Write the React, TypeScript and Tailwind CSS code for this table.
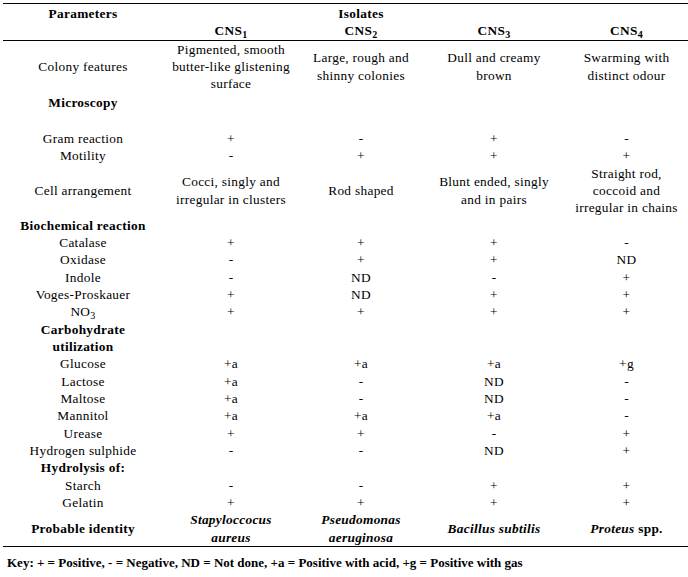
import React from 'react';

type Row = {
  label: React.ReactNode;
  bold?: boolean;
  cells?: React.ReactNode[];
  cls?: string;
};

const lines = (...parts: string[]) =>
  parts.map((p, i) => (
    <React.Fragment key={i}>
      {i > 0 && <br />}
      {p}
    </React.Fragment>
  ));

const rows: Row[] = [
  {
    label: 'Colony features',
    cls: 'pt-[1px]',
    cells: [
      lines('Pigmented, smooth', 'butter-like glistening', 'surface'),
      lines('Large, rough and', 'shinny colonies'),
      lines('Dull and creamy', 'brown'),
      lines('Swarming with', 'distinct odour'),
    ],
  },
  { label: 'Microscopy', bold: true, cls: 'pt-[1px] pb-[19px]' },
  { label: 'Gram reaction', cells: ['+', '-', '+', '-'] },
  { label: 'Motility', cells: ['-', '+', '+', '+'] },
  {
    label: 'Cell arrangement',
    cells: [
      lines('Cocci, singly and', 'irregular in clusters'),
      'Rod shaped',
      lines('Blunt ended, singly', 'and in pairs'),
      lines('Straight rod,', 'coccoid and', 'irregular in chains'),
    ],
  },
  { label: 'Biochemical reaction', bold: true },
  { label: 'Catalase', cells: ['+', '+', '+', '-'] },
  { label: 'Oxidase', cells: ['-', '+', '+', 'ND'] },
  { label: 'Indole', cells: ['-', 'ND', '-', '+'] },
  { label: 'Voges-Proskauer', cells: ['+', 'ND', '+', '+'] },
  {
    label: (
      <>
        NO<sub>3</sub>
      </>
    ),
    cells: ['+', '+', '+', '+'],
  },
  { label: lines('Carbohydrate', 'utilization'), bold: true },
  { label: 'Glucose', cells: ['+a', '+a', '+a', '+g'] },
  { label: 'Lactose', cells: ['+a', '-', 'ND', '-'] },
  { label: 'Maltose', cells: ['+a', '-', 'ND', '-'] },
  { label: 'Mannitol', cells: ['+a', '+a', '+a', '-'] },
  { label: 'Urease', cells: ['+', '+', '-', '+'] },
  { label: 'Hydrogen sulphide', cells: ['-', '-', 'ND', '+'] },
  { label: 'Hydrolysis of:', bold: true },
  { label: 'Starch', cells: ['-', '-', '+', '+'] },
  { label: 'Gelatin', cells: ['+', '+', '+', '+'] },
];

const Cns = ({ n }: { n: number }) => (
  <>
    CNS<sub>{n}</sub>
  </>
);

export default function App() {
  return (
    <div className="font-serif">
      <div className="w-[688px] h-[577px] bg-white text-black text-[13.33px] leading-[17.33px] tracking-[0.3px] font-[Liberation_Serif,serif]">
        <div className="pt-[3px] pl-[3px]">
          <table className="w-[685px] table-fixed border-collapse">
            <colgroup>
              <col className="w-[160px]" />
              <col className="w-[136px]" />
              <col className="w-[124px]" />
              <col className="w-[142px]" />
              <col className="w-[123px]" />
            </colgroup>
            <thead>
              <tr className="border-t border-black">
                <th className="p-0 pt-[1px] font-bold text-center">Parameters</th>
                <th className="p-0 pt-[1px]"></th>
                <th className="p-0 pt-[1px] font-bold text-center">Isolates</th>
                <th className="p-0 pt-[1px]"></th>
                <th className="p-0 pt-[1px]"></th>
              </tr>
              <tr className="border-b border-black">
                <th className="p-0"></th>
                {[1, 2, 3, 4].map((n) => (
                  <th key={n} className="p-0 font-bold text-center">
                    <Cns n={n} />
                  </th>
                ))}
              </tr>
            </thead>
            <tbody>
              {rows.map((r, i) => (
                <tr key={i}>
                  <td
                    className={`p-0 text-center align-middle whitespace-nowrap ${r.bold ? 'font-bold' : ''} ${r.cls ?? ''}`}
                  >
                    {r.label}
                  </td>
                  {[0, 1, 2, 3].map((c) => (
                    <td key={c} className="p-0 text-center align-middle whitespace-nowrap">
                      {r.cells ? r.cells[c] : ''}
                    </td>
                  ))}
                </tr>
              ))}
              <tr className="border-b border-black font-bold">
                <td className="p-0 text-center align-middle">Probable identity</td>
                <td className="p-0 text-center align-middle italic">
                  {lines('Stapyloccocus', 'aureus')}
                </td>
                <td className="p-0 text-center align-middle italic">
                  {lines('Pseudomonas', 'aeruginosa')}
                </td>
                <td className="p-0 text-center align-middle italic whitespace-nowrap">
                  Bacillus subtilis
                </td>
                <td className="p-0 text-center align-middle whitespace-nowrap">
                  <span className="italic">Proteus</span> spp.
                </td>
              </tr>
            </tbody>
          </table>
          <p className="mt-[7px] pl-[4px] text-[13px] font-bold tracking-normal whitespace-nowrap">
            Key: + = Positive, - = Negative, ND = Not done, +a = Positive with acid, +g = Positive with gas
          </p>
        </div>
      </div>
    </div>
  );
}
